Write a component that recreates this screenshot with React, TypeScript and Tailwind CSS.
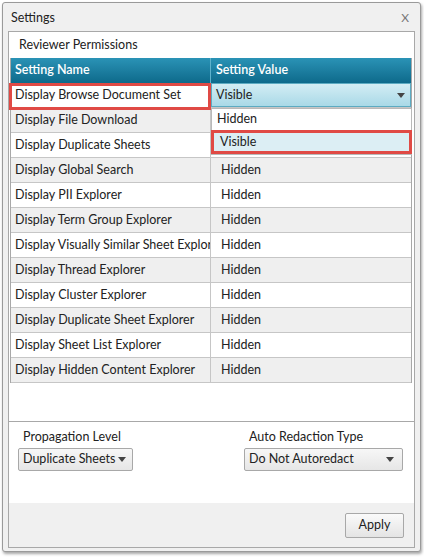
import React from "react";

const rows: [string, string][] = [
  ["Display Browse Document Set", "Visible"],
  ["Display File Download", "Hidden"],
  ["Display Duplicate Sheets", "Hidden"],
  ["Display Global Search", "Hidden"],
  ["Display PII Explorer", "Hidden"],
  ["Display Term Group Explorer", "Hidden"],
  ["Display Visually Similar Sheet Explorer", "Hidden"],
  ["Display Thread Explorer", "Hidden"],
  ["Display Cluster Explorer", "Hidden"],
  ["Display Duplicate Sheet Explorer", "Hidden"],
  ["Display Sheet List Explorer", "Hidden"],
  ["Display Hidden Content Explorer", "Hidden"],
];

const Arrow = () => (
  <svg width="8" height="5" viewBox="0 0 8 5">
    <path d="M0 0 L8 0 L4 5 Z" fill="#444" />
  </svg>
);

export default function App() {
  return (
    <div
      className="w-[424px] h-[559px] bg-white relative text-[12.5px]"
      style={{ fontFamily: "Lato, 'Noto Sans', sans-serif" }}
    >
      <div className="absolute left-[2px] top-[2px] w-[419px] h-[550px] bg-[#f0f0f0] border border-[#9a9a9a] rounded-[3px] shadow-[1px_2px_3px_rgba(0,0,0,0.35)] flex flex-col">
        {/* title */}
        <div className="h-[28px] flex items-center justify-between pl-[8px] pr-[11px] pt-[2px] text-[#222]">
          <span>Settings</span>
          <span className="text-[#777] text-[12px]">X</span>
        </div>
        {/* inner frame */}
        <div className="flex-1 mx-[5px] mb-[3px] border border-[#a8a8a8] flex flex-col bg-white">
          <div className="h-[26px] flex items-center pl-[10px] text-[#222]">
            Reviewer Permissions
          </div>
          {/* table box */}
          <div className="h-[364px] border-b border-[#a8a8a8] relative">
            <div className="ml-[1px] mr-[2px] border-l border-r border-[#a8a8a8]">
              <div className="flex h-[25px] bg-gradient-to-b from-[#2a93b6] to-[#0d6a8b] text-white font-semibold">
                <div className="w-[200px] flex items-center pl-[4px] border-r border-[#5fb2cc]">
                  Setting Name
                </div>
                <div className="flex-1 flex items-center pl-[5px]">Setting Value</div>
              </div>
              {rows.map(([n, v], i) => (
                <div
                  key={n}
                  className={`flex h-[25px] border-b border-[#c6c6c6] text-[#222] ${
                    i % 2 === 1 ? "bg-[#efefef]" : "bg-white"
                  }`}
                >
                  <div className="w-[200px] flex items-center pl-[4px] border-r border-[#c6c6c6] overflow-hidden whitespace-nowrap">
                    {n}
                  </div>
                  {i === 0 ? (
                    <div className="flex-1 flex items-center justify-between pl-[4px] pr-[5px] bg-gradient-to-b from-[#d3edf4] to-[#a9d9e7] border border-[#5cabc2]">
                      <span>{v}</span>
                      <Arrow />
                    </div>
                  ) : (
                    <div className="flex-1 flex items-center pl-[10px]">
                      {i === 1 || i === 2 ? "" : v}
                    </div>
                  )}
                </div>
              ))}
            </div>
            {/* red highlight around first name cell */}
            <div className="absolute left-[0px] top-[25px] w-[202px] h-[27px] border-[3px] border-[#e04a45]" />
            {/* dropdown list */}
            <div className="absolute left-[202px] top-[50px] w-[201px] h-[47px] bg-white border border-[#b9b9b9] text-[#222]">
              <div className="h-[21px] flex items-center pl-[5px]">Hidden</div>
              <div className="h-[24px] flex items-center pl-[6px] bg-[#dceef4] border-[3px] border-[#e04a45] -ml-[1px] -mr-[1px]">
                Visible
              </div>
            </div>
          </div>
          {/* bottom controls */}
          <div className="flex-1 flex justify-between pl-[9px] pr-[11px] pt-[7px]">
            <div className="flex flex-col gap-[3px]">
              <div className="pl-[5px] leading-[16px] text-[#222]">Propagation Level</div>
              <div className="w-[115px] h-[23px] border border-[#a8a8a8] rounded-[2px] bg-gradient-to-b from-[#f7f7f7] to-[#e6e6e6] flex items-center justify-between pl-[4px] pr-[6px] text-[#222] whitespace-nowrap">
                <span>Duplicate Sheets</span>
                <Arrow />
              </div>
            </div>
            <div className="flex flex-col gap-[3px]">
              <div className="pl-[5px] leading-[16px] text-[#222]">Auto Redaction Type</div>
              <div className="w-[159px] h-[23px] border border-[#a8a8a8] rounded-[2px] bg-gradient-to-b from-[#f7f7f7] to-[#e6e6e6] flex items-center justify-between pl-[4px] pr-[8px] text-[#222] whitespace-nowrap">
                <span>Do Not Autoredact</span>
                <Arrow />
              </div>
            </div>
          </div>
          {/* footer */}
          <div className="h-[44px] bg-[#f0f0f0] flex items-center justify-end pr-[10px]">
            <div className="w-[59px] h-[25px] border border-[#a8a8a8] rounded-[2px] bg-gradient-to-b from-[#fafafa] to-[#e4e4e4] flex items-center justify-center text-[#222]">
              Apply
            </div>
          </div>
        </div>
      </div>
    </div>
  );
}
